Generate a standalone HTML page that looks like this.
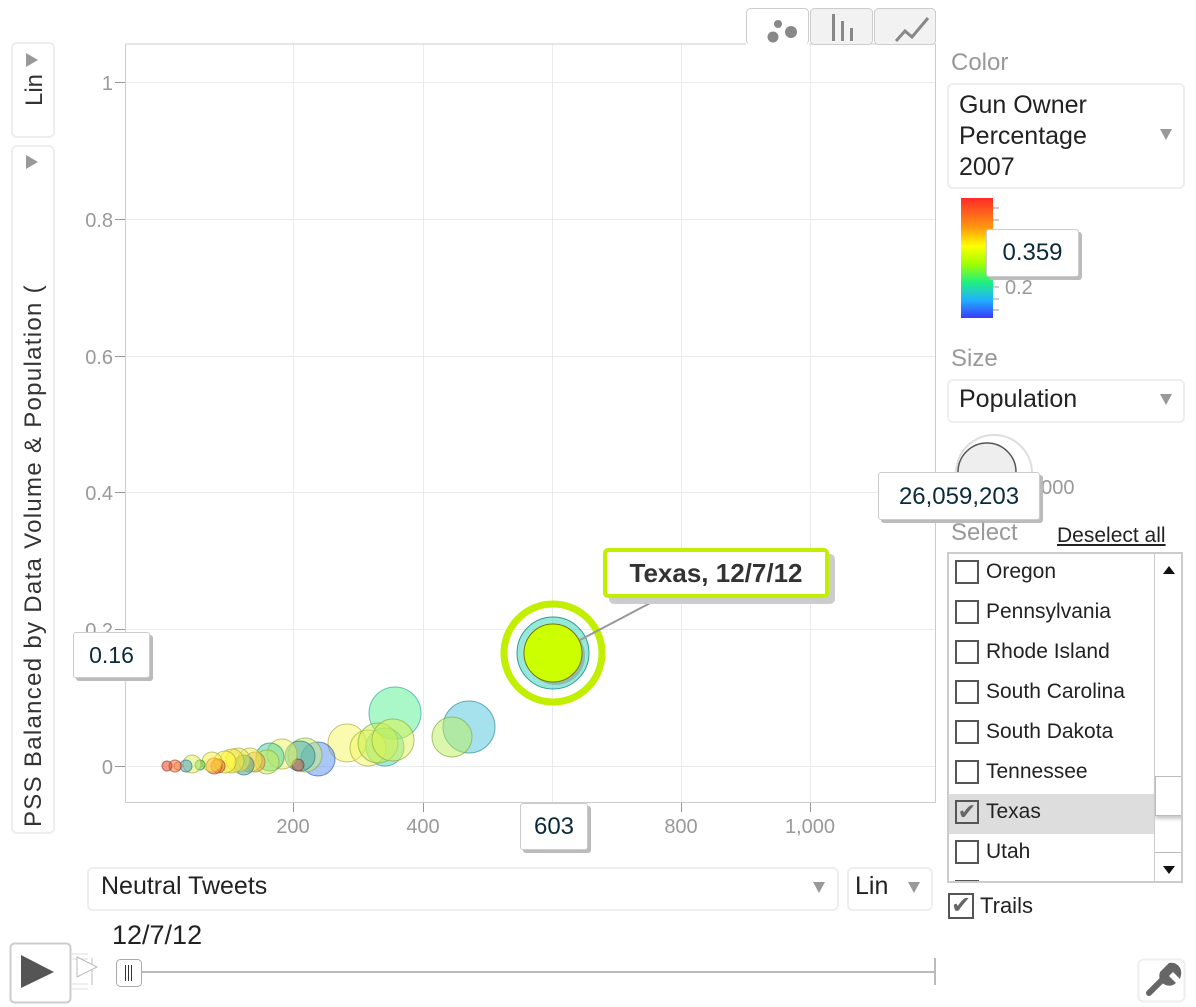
<!DOCTYPE html>
<html><head><meta charset="utf-8"><style>
body{margin:0;width:1196px;height:1007px;background:#fff;font-family:"Liberation Sans",sans-serif;position:relative;overflow:hidden}
.abs{position:absolute}
.box{position:absolute;border:2px solid #eee;border-radius:6px;background:#fff}
.tip{position:absolute;background:#fff;border:1px solid #ccc;border-radius:3px;box-shadow:3px 3px 0 #bbb;color:#0a2a3a;font-size:23px;text-align:center}
.lbl{color:#999;font-size:24px}
.tri{width:0;height:0;border-left:6px solid transparent;border-right:6px solid transparent;border-top:11px solid #999;position:absolute}
.cb{position:absolute;left:6px;width:24px;height:24px;border:2px solid #555;background:#fff;box-sizing:border-box}
.it{position:absolute;left:0;width:205px;height:40px;font-size:21px;color:#222}
.it span{position:absolute;left:37px;top:6px}
</style></head><body>

<div class="box" style="left:11px;top:42px;width:40px;height:92px"></div>
<div class="abs" style="left:13px;top:44px;width:40px;height:92px;">
 <div style="position:absolute;left:10px;top:62px;transform:rotate(-90deg);transform-origin:0 0;font-size:24px;color:#333;white-space:nowrap;line-height:24px">Lin</div>
</div>
<div class="abs" style="left:26px;top:53px;width:0;height:0;border-top:7px solid transparent;border-bottom:7px solid transparent;border-left:12px solid #999"></div>
<div class="box" style="left:11px;top:145px;width:40px;height:685px;overflow:hidden">
 <div style="position:absolute;left:8px;top:680px;transform:rotate(-90deg);transform-origin:0 0;font-size:24px;color:#333;white-space:nowrap;line-height:26px;letter-spacing:1.3px">PSS Balanced by Data Volume &amp; Population (</div>
</div>
<div class="abs" style="left:26px;top:155px;width:0;height:0;border-top:7px solid transparent;border-bottom:7px solid transparent;border-left:12px solid #999"></div>

<svg class="abs" style="left:0;top:0" width="1196" height="1007">
 <g stroke="#ebebeb" stroke-width="1">
  <line x1="125" y1="82.5" x2="935" y2="82.5"/><line x1="125" y1="219.5" x2="935" y2="219.5"/>
  <line x1="125" y1="356.5" x2="935" y2="356.5"/><line x1="125" y1="492.5" x2="935" y2="492.5"/>
  <line x1="125" y1="629.5" x2="935" y2="629.5"/><line x1="125" y1="766.5" x2="935" y2="766.5"/>
  <line x1="293.5" y1="44" x2="293.5" y2="802"/><line x1="423.5" y1="44" x2="423.5" y2="802"/>
  <line x1="552.5" y1="44" x2="552.5" y2="802"/><line x1="681.5" y1="44" x2="681.5" y2="802"/>
  <line x1="810.5" y1="44" x2="810.5" y2="802"/>
 </g>
 <g stroke="#ccc" fill="none"><path d="M125.5 44 V802.5 H935.5 V44 H808"/><line x1="125.5" y1="44" x2="746" y2="44"/></g>
 <g stroke="#999"><line x1="115" y1="82.5" x2="125" y2="82.5"/><line x1="115" y1="219.5" x2="125" y2="219.5"/><line x1="115" y1="356.5" x2="125" y2="356.5"/><line x1="115" y1="492.5" x2="125" y2="492.5"/><line x1="115" y1="629.5" x2="125" y2="629.5"/><line x1="115" y1="766.5" x2="125" y2="766.5"/>
 <line x1="293.5" y1="803" x2="293.5" y2="812"/><line x1="423.5" y1="803" x2="423.5" y2="812"/><line x1="681.5" y1="803" x2="681.5" y2="812"/><line x1="810.5" y1="803" x2="810.5" y2="812"/></g>
 <g fill="#999" font-size="20" font-family="Liberation Sans" text-anchor="end">
  <text x="113" y="90">1</text><text x="113" y="227">0.8</text><text x="113" y="364">0.6</text><text x="113" y="500">0.4</text><text x="113" y="637">0.2</text><text x="113" y="774">0</text>
 </g>
 <g fill="#999" font-size="20" font-family="Liberation Sans" text-anchor="middle">
  <text x="293" y="833">200</text><text x="423" y="833">400</text><text x="681" y="833">800</text><text x="810" y="833">1,000</text>
 </g>
 <g fill-opacity="0.5" stroke-opacity="0.7" stroke-width="1">
  <circle cx="395" cy="713" r="26" fill="#55f08f" stroke="#3a9"/>
  <circle cx="469" cy="727" r="26" fill="#4cc6dd" stroke="#389"/>
  <circle cx="452" cy="737" r="20" fill="#b9f05a" stroke="#8a4"/>
  <circle cx="347" cy="743" r="19" fill="#f6f760" stroke="#aa4"/>
  <circle cx="385" cy="747" r="19" fill="#40d8c0" stroke="#399"/>
  <circle cx="368" cy="748" r="18" fill="#f2f560" stroke="#aa4"/>
  <circle cx="378" cy="743" r="20" fill="#c4f050" stroke="#8a4"/>
  <circle cx="393" cy="740" r="21" fill="#dcf450" stroke="#9a4"/>
  <circle cx="318" cy="759" r="17" fill="#5590f0" stroke="#36a"/>
  <circle cx="305" cy="755" r="17" fill="#c8ee70" stroke="#8a4"/>
  <circle cx="300" cy="756" r="15" fill="#3aa8b0" stroke="#378"/>
  <circle cx="298" cy="765" r="6" fill="#c05040" stroke="#833"/>
  <circle cx="282" cy="754" r="15" fill="#eef560" stroke="#aa4"/>
  <circle cx="270" cy="757" r="14" fill="#40d0a0" stroke="#396"/>
  <circle cx="267" cy="762" r="12" fill="#d0ee50" stroke="#9a4"/>
  <circle cx="255" cy="762" r="10" fill="#ffa030" stroke="#a73"/>
  <circle cx="250" cy="760" r="12" fill="#f0f050" stroke="#aa4"/>
  <circle cx="244" cy="765" r="10" fill="#3a9aa0" stroke="#377"/>
  <circle cx="238" cy="760" r="12" fill="#e0f050" stroke="#aa4"/>
  <circle cx="232" cy="761" r="12" fill="#ffe030" stroke="#aa4"/>
  <circle cx="225" cy="762" r="11" fill="#ffff30" stroke="#aa4"/>
  <circle cx="218" cy="766" r="7" fill="#f05020" stroke="#a33"/>
  <circle cx="214" cy="766" r="8" fill="#ff8020" stroke="#a53"/>
  <circle cx="212" cy="762" r="10" fill="#f8f040" stroke="#aa4"/>
  <circle cx="200" cy="765" r="5" fill="#40d040" stroke="#383"/>
  <circle cx="192" cy="764" r="9" fill="#e0f060" stroke="#aa4"/>
  <circle cx="186" cy="766" r="6" fill="#40a0c0" stroke="#378"/>
  <circle cx="178" cy="766" r="4" fill="#f0b090" stroke="#a66"/>
  <circle cx="175" cy="766" r="6" fill="#ff7020" stroke="#a43"/>
  <circle cx="167" cy="766" r="5" fill="#e04010" stroke="#a33"/>
 </g>
 <circle cx="553" cy="653" r="49" fill="none" stroke="#c2ee00" stroke-width="7"/>
 <circle cx="553" cy="653" r="36" fill="#50d8c0" fill-opacity="0.6" stroke="#399"/>
 <circle cx="556" cy="656" r="29" fill="#8aa" fill-opacity="0.7"/>
 <circle cx="553" cy="653" r="29" fill="#ccff00" stroke="#770"/>
 <line x1="580" y1="640" x2="675" y2="590" stroke="#999" stroke-width="2"/>
 <rect x="746.5" y="8.5" width="62" height="36" rx="4" fill="#fff" stroke="#ccc"/>
 <rect x="810.5" y="8.5" width="62" height="36" rx="4" fill="#f2f2f2" stroke="#ccc"/>
 <rect x="874.5" y="8.5" width="61" height="36" rx="4" fill="#f2f2f2" stroke="#ccc"/>
 <line x1="746" y1="44.5" x2="809" y2="44.5" stroke="#fff" stroke-width="2"/>
 <g fill="#888"><circle cx="778" cy="24" r="4"/><circle cx="773" cy="37" r="5.5"/><circle cx="791" cy="32" r="6"/>
 <rect x="832" y="14" width="3" height="27"/><rect x="841" y="21" width="3" height="20"/><rect x="850" y="28" width="3" height="13"/></g>
 <path d="M896 41 L905 31 L912 37 L928 18" fill="none" stroke="#888" stroke-width="3"/>
 <defs><linearGradient id="g" x1="0" y1="0" x2="0" y2="1"><stop offset="0" stop-color="#ff2a2a"/><stop offset=".25" stop-color="#ff9a10"/><stop offset=".4" stop-color="#ffff00"/><stop offset=".55" stop-color="#a0ff00"/><stop offset=".7" stop-color="#20f080"/><stop offset=".85" stop-color="#20b0ff"/><stop offset="1" stop-color="#3a3aff"/></linearGradient></defs>
 <rect x="961" y="198" width="32" height="120" fill="url(#g)"/>
 <g stroke="#999"><line x1="993" y1="208" x2="999" y2="208"/><line x1="993" y1="220" x2="999" y2="220"/><line x1="993" y1="287" x2="999" y2="287"/><line x1="993" y1="299" x2="999" y2="299"/><line x1="993" y1="310" x2="999" y2="310"/></g>
 <text x="1005" y="294" font-size="20" fill="#999" font-family="Liberation Sans">0.2</text>
 <circle cx="994" cy="473" r="38" fill="#fff" stroke="#ddd" stroke-width="2"/>
 <circle cx="987" cy="472" r="29" fill="#eee" stroke="#555" stroke-width="1.5"/>
 <text x="1030" y="494" font-size="20" fill="#999" font-family="Liberation Sans">0000</text>
 <line x1="130" y1="972" x2="935" y2="972" stroke="#bbb" stroke-width="2"/>
 <line x1="935" y1="958" x2="935" y2="985" stroke="#bbb" stroke-width="2"/>
 <line x1="92" y1="958" x2="92" y2="985" stroke="#bbb" stroke-width="1"/>
 <g stroke="#ddd"><line x1="72" y1="954" x2="88" y2="954"/><line x1="72" y1="959" x2="88" y2="959"/><line x1="72" y1="984" x2="88" y2="984"/><line x1="72" y1="989" x2="88" y2="989"/></g>
 <path d="M77 957 L97 967 L77 977 Z" fill="#fff" stroke="#bbb"/>
 <rect x="116.5" y="959.5" width="25" height="27" rx="4" fill="#fff" stroke="#aaa"/>
 <g stroke="#333"><line x1="125.5" y1="965" x2="125.5" y2="981"/><line x1="128.5" y1="965" x2="128.5" y2="981"/><line x1="131.5" y1="965" x2="131.5" y2="981"/></g>
 <rect x="10.5" y="943.5" width="60" height="59" rx="4" fill="#fff" stroke="#ccc" stroke-width="2"/>
 <path d="M21 955 L54 972 L21 988 Z" fill="#555"/>
 <rect x="1138.5" y="959.5" width="46" height="42" rx="5" fill="#fff" stroke="#eee" stroke-width="2"/>
 <path d="M1149 993 L1164 978" stroke="#666" stroke-width="6" stroke-linecap="round"/>
 <path d="M1160 972 a10 10 0 0 0 13 13 l3 -2 -3 -3 -4 -4 4 -4 4 4 3 3 1 -4 a10 10 0 0 0 -12 -12 z" fill="#666"/>
</svg>

<div class="tip" style="left:73px;top:632px;width:75px;height:44px;line-height:44px">0.16</div>
<div class="tip" style="left:520px;top:803px;width:66px;height:45px;line-height:45px;font-size:24px">603</div>
<div class="abs" style="left:603px;top:548px;width:218px;height:42px;border:4px solid #c2ee00;border-radius:5px;background:#fff;box-shadow:6px 6px 0 #ccc;font-weight:bold;font-size:26px;color:#333;line-height:42px;text-align:center">Texas, 12/7/12</div>

<div class="abs lbl" style="left:951px;top:49px">Color</div>
<div class="box" style="left:947px;top:83px;width:234px;height:102px"></div>
<div class="abs" style="left:959px;top:90px;font-size:25px;color:#222;line-height:31px">Gun Owner<br>Percentage<br>2007</div>
<div class="tri" style="left:1160px;top:129px"></div>
<div class="tip" style="left:986px;top:229px;width:91px;height:46px;line-height:46px;font-size:24px">0.359</div>
<div class="abs lbl" style="left:951px;top:345px">Size</div>
<div class="box" style="left:947px;top:379px;width:234px;height:40px"></div>
<div class="abs" style="left:959px;top:385px;font-size:25px;color:#222">Population</div>
<div class="tri" style="left:1160px;top:394px"></div>
<div class="tip" style="left:878px;top:472px;width:160px;height:46px;line-height:48px;font-size:24px">26,059,203</div>
<div class="abs lbl" style="left:951px;top:519px">Select</div>
<div class="abs" style="left:1057px;top:524px;font-size:21px;color:#222;text-decoration:underline">Deselect all</div>
<div class="abs" style="left:947px;top:552px;width:236px;height:331px;border:2px solid #ccc;box-sizing:border-box;overflow:hidden">
 <div class="it" style="top:0"><div class="cb" style="top:6px"></div><span>Oregon</span></div>
 <div class="it" style="top:40px"><div class="cb" style="top:6px"></div><span>Pennsylvania</span></div>
 <div class="it" style="top:80px"><div class="cb" style="top:6px"></div><span>Rhode Island</span></div>
 <div class="it" style="top:120px"><div class="cb" style="top:6px"></div><span>South Carolina</span></div>
 <div class="it" style="top:160px"><div class="cb" style="top:6px"></div><span>South Dakota</span></div>
 <div class="it" style="top:200px"><div class="cb" style="top:6px"></div><span>Tennessee</span></div>
 <div class="it" style="top:240px;background:#ddd"><div class="cb" style="top:6px;background:#ddd;color:#666;font-size:22px;line-height:20px;text-align:center">✔</div><span>Texas</span></div>
 <div class="it" style="top:280px"><div class="cb" style="top:6px"></div><span>Utah</span></div>
 <div class="it" style="top:320px"><div class="cb" style="top:6px"></div><span>Vermont</span></div>
 <div class="abs" style="left:205px;top:0;width:28px;height:327px;border-left:1px solid #ccc;background:#fff">
  <div class="abs" style="left:8px;top:12px;border-left:6px solid transparent;border-right:6px solid transparent;border-bottom:8px solid #111"></div>
  <div class="abs" style="left:0;top:222px;width:26px;height:38px;border:1px solid #bbb;background:#fff;box-shadow:0 3px 3px #ccc"></div>
  <div class="abs" style="left:0;top:298px;width:28px;border-top:1px solid #bbb"></div>
  <div class="abs" style="left:8px;top:312px;border-left:6px solid transparent;border-right:6px solid transparent;border-top:8px solid #111"></div>
 </div>
</div>
<div class="abs" style="left:948px;top:893px;width:26px;height:26px;border:2px solid #555;box-sizing:border-box;color:#666;font-size:24px;line-height:22px;text-align:center">✔</div>
<div class="abs" style="left:980px;top:893px;font-size:22px;color:#222">Trails</div>

<div class="box" style="left:87px;top:867px;width:748px;height:40px"></div>
<div class="abs" style="left:101px;top:872px;font-size:25px;color:#222">Neutral Tweets</div>
<div class="tri" style="left:813px;top:882px"></div>
<div class="box" style="left:847px;top:867px;width:82px;height:40px"></div>
<div class="abs" style="left:855px;top:872px;font-size:25px;color:#222">Lin</div>
<div class="tri" style="left:908px;top:882px"></div>
<div class="abs" style="left:112px;top:920px;font-size:27px;color:#222">12/7/12</div>
</body></html>
